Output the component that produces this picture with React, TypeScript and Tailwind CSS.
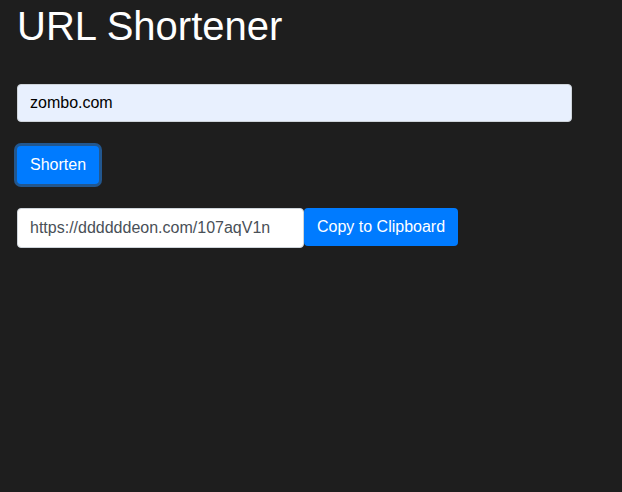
export default function App() {
  return (
    <div className="min-h-screen bg-[#1e1e1e] px-[17px] pt-[2px] font-['Liberation_Sans',Arial,sans-serif]">
      <h1 className="text-[40px] leading-[48px] text-white">URL Shortener</h1>
      <div className="mt-[34px]">
        <input
          defaultValue="zombo.com"
          className="block h-[38px] w-[555px] rounded-[4px] border border-[#ced4da] bg-[#e8f0fe] px-3 font-['Liberation_Sans_Narrow','Liberation_Sans',Arial,sans-serif] text-base text-black outline-none"
        />
      </div>
      <div className="mt-[24px]">
        <button className="h-[38px] rounded-[4px] border border-transparent bg-[#007bff] px-3 text-base text-white shadow-[0_0_0_3px_rgba(38,143,255,0.5)]">
          Shorten
        </button>
      </div>
      <div className="mt-[24px] flex items-start">
        <input
          defaultValue="https://ddddddeon.com/107aqV1n"
          className="block h-[40px] w-[287px] rounded-[4px] border border-[#ced4da] bg-white px-3 text-base text-[#495057] outline-none"
        />
        <button className="h-[38px] rounded-[4px] border border-transparent bg-[#007bff] px-3 text-base text-white">
          Copy to Clipboard
        </button>
      </div>
    </div>
  );
}
